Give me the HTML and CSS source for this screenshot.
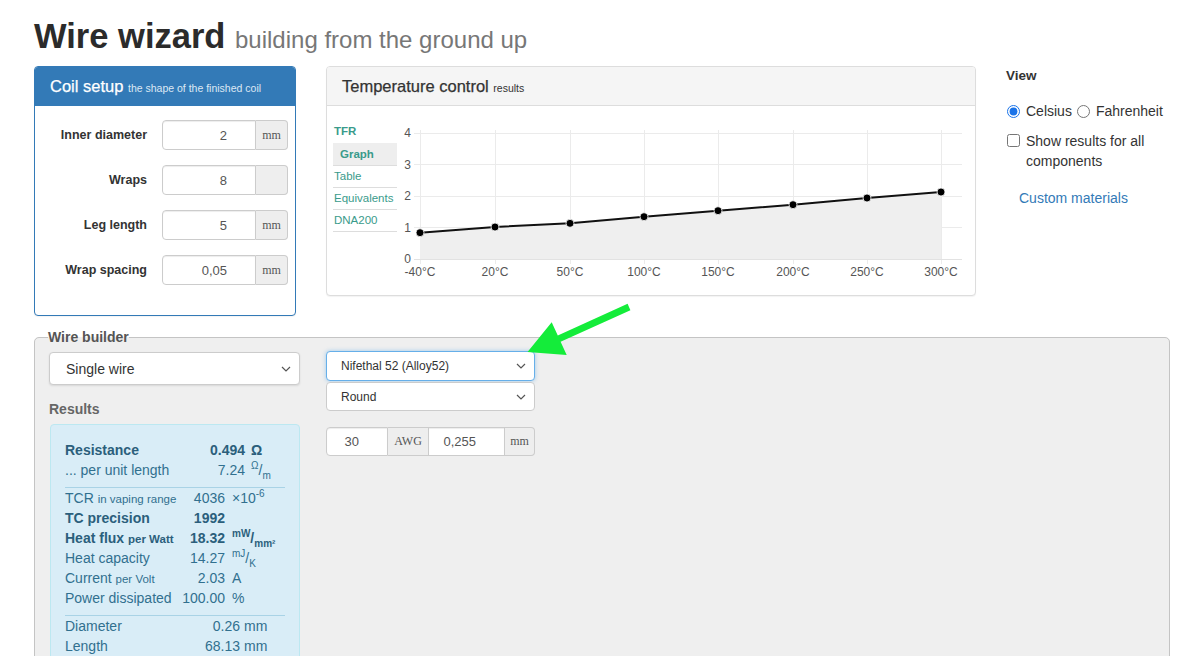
FILE: index.html
```html
<!DOCTYPE html>
<html lang="en">
  <head>
    <meta charset="UTF-8" />
    <meta name="viewport" content="width=device-width, initial-scale=1.0" />
    <title>Wire wizard</title>
    <link rel="stylesheet" href="styles.css">
  </head>
  <body>
    <div class="page">
      <h1>Wire wizard <small>building from the ground up</small></h1>

      <div class="top-row">
        <div class="panel coil">
          <div class="panel-heading">Coil setup <small>the shape of the finished coil</small></div>
          <div class="coil-body">
            <label class="coil-label">Inner diameter</label>
            <div class="input-group">
              <input type="text" value="2" />
              <span class="addon">mm</span>
            </div>
            <label class="coil-label">Wraps</label>
            <div class="input-group">
              <input type="text" value="8" />
              <span class="addon"></span>
            </div>
            <label class="coil-label">Leg length</label>
            <div class="input-group">
              <input type="text" value="5" />
              <span class="addon">mm</span>
            </div>
            <label class="coil-label">Wrap spacing</label>
            <div class="input-group">
              <input type="text" value="0,05" />
              <span class="addon">mm</span>
            </div>
          </div>
        </div>

        <div class="panel temp">
          <div class="panel-heading">Temperature control <small>results</small></div>
          <div class="temp-body">
            <ul class="tabs">
              <li class="tab-title">TFR</li>
              <li class="active">Graph</li>
              <li>Table</li>
              <li>Equivalents</li>
              <li>DNA200</li>
            </ul>
            <svg class="chart" width="571" height="170" viewBox="0 0 571 170">
              <g stroke="#ebebeb" stroke-width="1">
                <line x1="17" y1="17.5" x2="565" y2="17.5" />
                <line x1="17" y1="48.5" x2="565" y2="48.5" />
                <line x1="17" y1="80.5" x2="565" y2="80.5" />
                <line x1="17" y1="111.5" x2="565" y2="111.5" />
                <line x1="23.5" y1="14" x2="23.5" y2="148" />
                <line x1="98.5" y1="14" x2="98.5" y2="148" />
                <line x1="173.5" y1="14" x2="173.5" y2="148" />
                <line x1="247.5" y1="14" x2="247.5" y2="148" />
                <line x1="321.5" y1="14" x2="321.5" y2="148" />
                <line x1="396.5" y1="14" x2="396.5" y2="148" />
                <line x1="470.5" y1="14" x2="470.5" y2="148" />
                <line x1="544.5" y1="14" x2="544.5" y2="148" />
              </g>
              <polygon fill="#efefef" points="23,116.7 98,111 173,107.3 247,100.7 321,94.7 396,88.7 470,82 544,76 544,143 23,143" />
              <line x1="17" y1="143.5" x2="565" y2="143.5" stroke="#e2e2e2" />
              <polyline fill="none" stroke="#111" stroke-width="2" points="23,116.7 98,111 173,107.3 247,100.7 321,94.7 396,88.7 470,82 544,76" />
              <g fill="#000" stroke="#fff" stroke-width="0.8">
                <circle cx="23" cy="116.7" r="4" />
                <circle cx="98" cy="111" r="4" />
                <circle cx="173" cy="107.3" r="4" />
                <circle cx="247" cy="100.7" r="4" />
                <circle cx="321" cy="94.7" r="4" />
                <circle cx="396" cy="88.7" r="4" />
                <circle cx="470" cy="82" r="4" />
                <circle cx="544" cy="76" r="4" />
              </g>
              <g class="axis" text-anchor="end">
                <text x="14" y="21">4</text>
                <text x="14" y="53">3</text>
                <text x="14" y="84">2</text>
                <text x="14" y="116">1</text>
                <text x="14" y="147">0</text>
              </g>
              <g class="axis" text-anchor="middle">
                <text x="23" y="160">-40°C</text>
                <text x="98" y="160">20°C</text>
                <text x="173" y="160">50°C</text>
                <text x="247" y="160">100°C</text>
                <text x="321" y="160">150°C</text>
                <text x="396" y="160">200°C</text>
                <text x="470" y="160">250°C</text>
                <text x="544" y="160">300°C</text>
              </g>
            </svg>
          </div>
        </div>

        <div class="view">
          <div class="view-title">View</div>
          <div class="radios">
            <label><input type="radio" name="unit" checked />Celsius</label>
            <label><input type="radio" name="unit" />Fahrenheit</label>
          </div>
          <label class="check">
            <input type="checkbox" />
            <span>Show results for all components</span>
          </label>
          <a class="custom" href="#">Custom materials</a>
        </div>
      </div>

      <fieldset class="builder">
        <legend>Wire builder</legend>
        <div class="builder-grid">
          <div class="builder-left">
            <div class="select big">
              <span>Single wire</span>
              <svg width="10" height="6" viewBox="0 0 10 6"><path d="M1 1l4 4 4-4" fill="none" stroke="#555" stroke-width="1.2" /></svg>
            </div>
            <div class="results-title">Results</div>
            <div class="results">
              <div class="res-group g1">
                <div class="res-row strong">
                  <span class="k">Resistance</span><span class="v">0.494</span><span class="u">Ω</span>
                </div>
                <div class="res-row">
                  <span class="k">... per unit length</span><span class="v">7.24</span><span class="u"><sup>Ω</sup>/<sub>m</sub></span>
                </div>
              </div>
              <div class="res-group g2">
                <div class="res-row">
                  <span class="k">TCR <small>in vaping range</small></span><span class="v">4036</span><span class="u">×10<sup>-6</sup></span>
                </div>
                <div class="res-row strong">
                  <span class="k">TC precision</span><span class="v">1992</span><span class="u"></span>
                </div>
                <div class="res-row strong">
                  <span class="k">Heat flux <small>per Watt</small></span><span class="v">18.32</span><span class="u"><sup>mW</sup>/<sub>mm²</sub></span>
                </div>
                <div class="res-row">
                  <span class="k">Heat capacity</span><span class="v">14.27</span><span class="u"><sup>mJ</sup>/<sub>K</sub></span>
                </div>
                <div class="res-row">
                  <span class="k">Current <small>per Volt</small></span><span class="v">2.03</span><span class="u">A</span>
                </div>
                <div class="res-row">
                  <span class="k">Power dissipated</span><span class="v">100.00</span><span class="u">%</span>
                </div>
              </div>
              <div class="res-group g3">
                <div class="res-row">
                  <span class="k">Diameter</span><span class="v">0.26</span><span class="u">mm</span>
                </div>
                <div class="res-row">
                  <span class="k">Length</span><span class="v">68.13</span><span class="u">mm</span>
                </div>
              </div>
            </div>
          </div>

          <div class="builder-right">
            <div class="select focus">
              <span>Nifethal 52 (Alloy52)</span>
              <svg width="10" height="6" viewBox="0 0 10 6"><path d="M1 1l4 4 4-4" fill="none" stroke="#555" stroke-width="1.2" /></svg>
            </div>
            <div class="select small">
              <span>Round</span>
              <svg width="10" height="6" viewBox="0 0 10 6"><path d="M1 1l4 4 4-4" fill="none" stroke="#555" stroke-width="1.2" /></svg>
            </div>
            <div class="input-group wire">
              <input class="gauge" type="text" value="30" />
              <span class="addon awg">AWG</span>
              <input class="diam" type="text" value="0,255" />
              <span class="addon mm">mm</span>
            </div>
          </div>
        </div>
      </fieldset>
    </div>

    <svg class="arrow" width="130" height="70" viewBox="520 298 130 70">
      <polygon fill="#14ec3a" points="627.6,303.8 630.4,310.2 560.6,341.8 566.7,355 527.5,352 551.7,322.3 557.8,335.4" />
    </svg>
  </body>
</html>
```

FILE: styles.css
```css
* {
  box-sizing: border-box;
}

body {
  margin: 0;
  font-family: "Liberation Sans", Arial, sans-serif;
  font-size: 14px;
  color: #333;
  background: #fff;
  overflow: hidden;
}

.page {
  width: 1136px;
  margin-left: 34px;
}

h1 {
  margin: 16px 0 10px;
  font-size: 34.5px;
  line-height: 40px;
  font-weight: bold;
  color: #2b2b2b;
}

h1 small {
  font-size: 24px;
  line-height: 1;
  font-weight: normal;
  color: #777;
}

.top-row {
  display: grid;
  grid-template-columns: 262px 650px 1fr;
  column-gap: 30px;
  align-items: start;
}

.panel {
  border: 1px solid #ddd;
  border-radius: 4px;
  background: #fff;
  box-shadow: 0 1px 1px rgba(0, 0, 0, 0.05);
  overflow: hidden;
}

.panel-heading {
  height: 39px;
  line-height: 39px;
  padding: 0 15px;
  font-size: 16.5px;
  -webkit-text-stroke: 0.25px;
}

.panel-heading small {
  font-size: 10.5px;
  -webkit-text-stroke: 0;
}

.coil {
  height: 250px;
  border-color: #337ab7;
}

.coil .panel-heading {
  background: #337ab7;
  color: #fff;
}

.coil .panel-heading small {
  color: #dce8f4;
}

.coil-body {
  display: grid;
  grid-template-columns: 112px 126px;
  column-gap: 15px;
  row-gap: 15px;
  align-items: center;
  padding-top: 14px;
}

.coil-label {
  text-align: right;
  font-weight: bold;
  font-size: 12.5px;
  color: #333;
}

.input-group {
  display: flex;
  height: 30px;
}

.input-group input {
  width: 94px;
  height: 100%;
  border: 1px solid #ccc;
  border-radius: 4px 0 0 4px;
  padding: 0 28px 0 0;
  text-align: right;
  font-family: "Liberation Sans", Arial, sans-serif;
  font-size: 13px;
  color: #555;
  box-shadow: inset 0 1px 1px rgba(0, 0, 0, 0.075);
  outline: none;
}

.addon {
  display: flex;
  align-items: center;
  justify-content: center;
  width: 32px;
  height: 100%;
  background: #eee;
  border: 1px solid #ccc;
  border-left: 0;
  border-radius: 0 4px 4px 0;
  font-family: "Liberation Serif", "Times New Roman", serif;
  font-size: 12px;
  color: #555;
}

.temp {
  height: 230px;
}

.temp .panel-heading {
  background: #f5f5f5;
  border-bottom: 1px solid #ddd;
  color: #333;
}

.temp-body {
  display: flex;
  align-items: flex-start;
  padding: 10px 0 0 6px;
}

.tabs {
  list-style: none;
  margin: 5px 0 0;
  padding: 0;
  width: 64px;
  font-size: 11.5px;
  color: #3a9b8b;
}

.tabs li {
  height: 22px;
  line-height: 21px;
  padding-left: 1px;
  border-bottom: 1px solid #ddd;
}

.tabs .tab-title {
  border-bottom: 0;
  font-weight: bold;
}

.tabs .active {
  background: #eee;
  font-weight: bold;
  padding-left: 7px;
  height: 23px;
  line-height: 22px;
}

.chart {
  display: block;
}

.axis {
  font-family: "Liberation Sans", Arial, sans-serif;
  font-size: 12px;
  fill: #555;
}

.view {
  font-size: 14px;
  color: #333;
}

.view-title {
  font-size: 13.5px;
  font-weight: bold;
  line-height: 20px;
}

.radios {
  display: flex;
  gap: 4px;
  margin-top: 15px;
  line-height: 20px;
}

.radios label,
.check {
  display: flex;
  gap: 6px;
}

.radios label {
  align-items: center;
}

input[type="radio"],
input[type="checkbox"] {
  width: 13px;
  height: 13px;
  margin: 0 0 0 1px;
  accent-color: #1a73e8;
}

.check {
  align-items: flex-start;
  margin-top: 10px;
  line-height: 20px;
}

.check input {
  margin-top: 3px;
}

.custom {
  display: block;
  margin: 17px 0 0 13px;
  line-height: 20px;
  color: #337ab7;
  text-decoration: none;
}

.builder {
  margin: 13px 0 0;
  padding: 6px 14px 20px;
  border: 1px solid #c4c4c4;
  border-radius: 5px;
  background: #efefef;
  min-width: 0;
}

.builder legend {
  padding: 0;
  margin-left: -1px;
  font-size: 14px;
  line-height: 16px;
  font-weight: bold;
  color: #555;
}

.builder-grid {
  display: grid;
  grid-template-columns: 251px 209px;
  column-gap: 26px;
  align-items: start;
}

.select {
  display: flex;
  align-items: center;
  justify-content: space-between;
  background: #fff;
  border: 1px solid #ccc;
  border-radius: 4px;
  color: #333;
}

.select.big {
  height: 33px;
  margin-top: 1px;
  padding: 0 8px 0 16px;
  font-size: 14px;
  box-shadow: 0 1px 2px rgba(0, 0, 0, 0.1);
}

.select.focus,
.select.small {
  padding: 0 8px 0 14px;
  font-size: 12px;
}

.select.focus {
  height: 30px;
  border-color: #66afe9;
  box-shadow: 0 0 4px rgba(102, 175, 233, 0.6);
}

.select.small {
  height: 29px;
  margin-top: 1px;
}

.results-title {
  margin-top: 16px;
  font-size: 14px;
  line-height: 16px;
  font-weight: bold;
  color: #666;
}

.results {
  margin: 7px 0 0 1px;
  padding: 15px 14px 24px;
  background: #d9edf7;
  border: 1px solid #bce8f1;
  border-radius: 4px;
  color: #31708f;
}

.res-group + .res-group {
  margin-top: 7px;
  border-top: 1px solid #a9d3e6;
}

.res-row {
  display: grid;
  height: 20px;
  line-height: 20px;
  white-space: nowrap;
}

.g1 .res-row {
  grid-template-columns: 114px 60px auto;
  column-gap: 6px;
}

.g2 .res-row {
  grid-template-columns: 103px 50px auto;
  column-gap: 7px;
}

.g3 .res-row {
  grid-template-columns: 121px 50px auto;
  column-gap: 4px;
}

.res-row .v {
  text-align: right;
}

.res-row.strong {
  font-weight: bold;
  color: #2b5f7c;
}

.res-row small {
  font-size: 11.5px;
}

.res-row sup,
.res-row sub {
  font-size: 10px;
  line-height: 0;
}

.input-group.wire {
  margin-top: 16px;
  height: 29px;
}

.wire .gauge {
  width: 62px;
}

.wire .awg {
  width: 41px;
  border-radius: 0;
}

.wire .diam {
  width: 76px;
  border-left: 0;
  border-radius: 0;
}

.wire .mm {
  width: 30px;
}

.arrow {
  position: absolute;
  left: 520px;
  top: 298px;
  pointer-events: none;
}
```
